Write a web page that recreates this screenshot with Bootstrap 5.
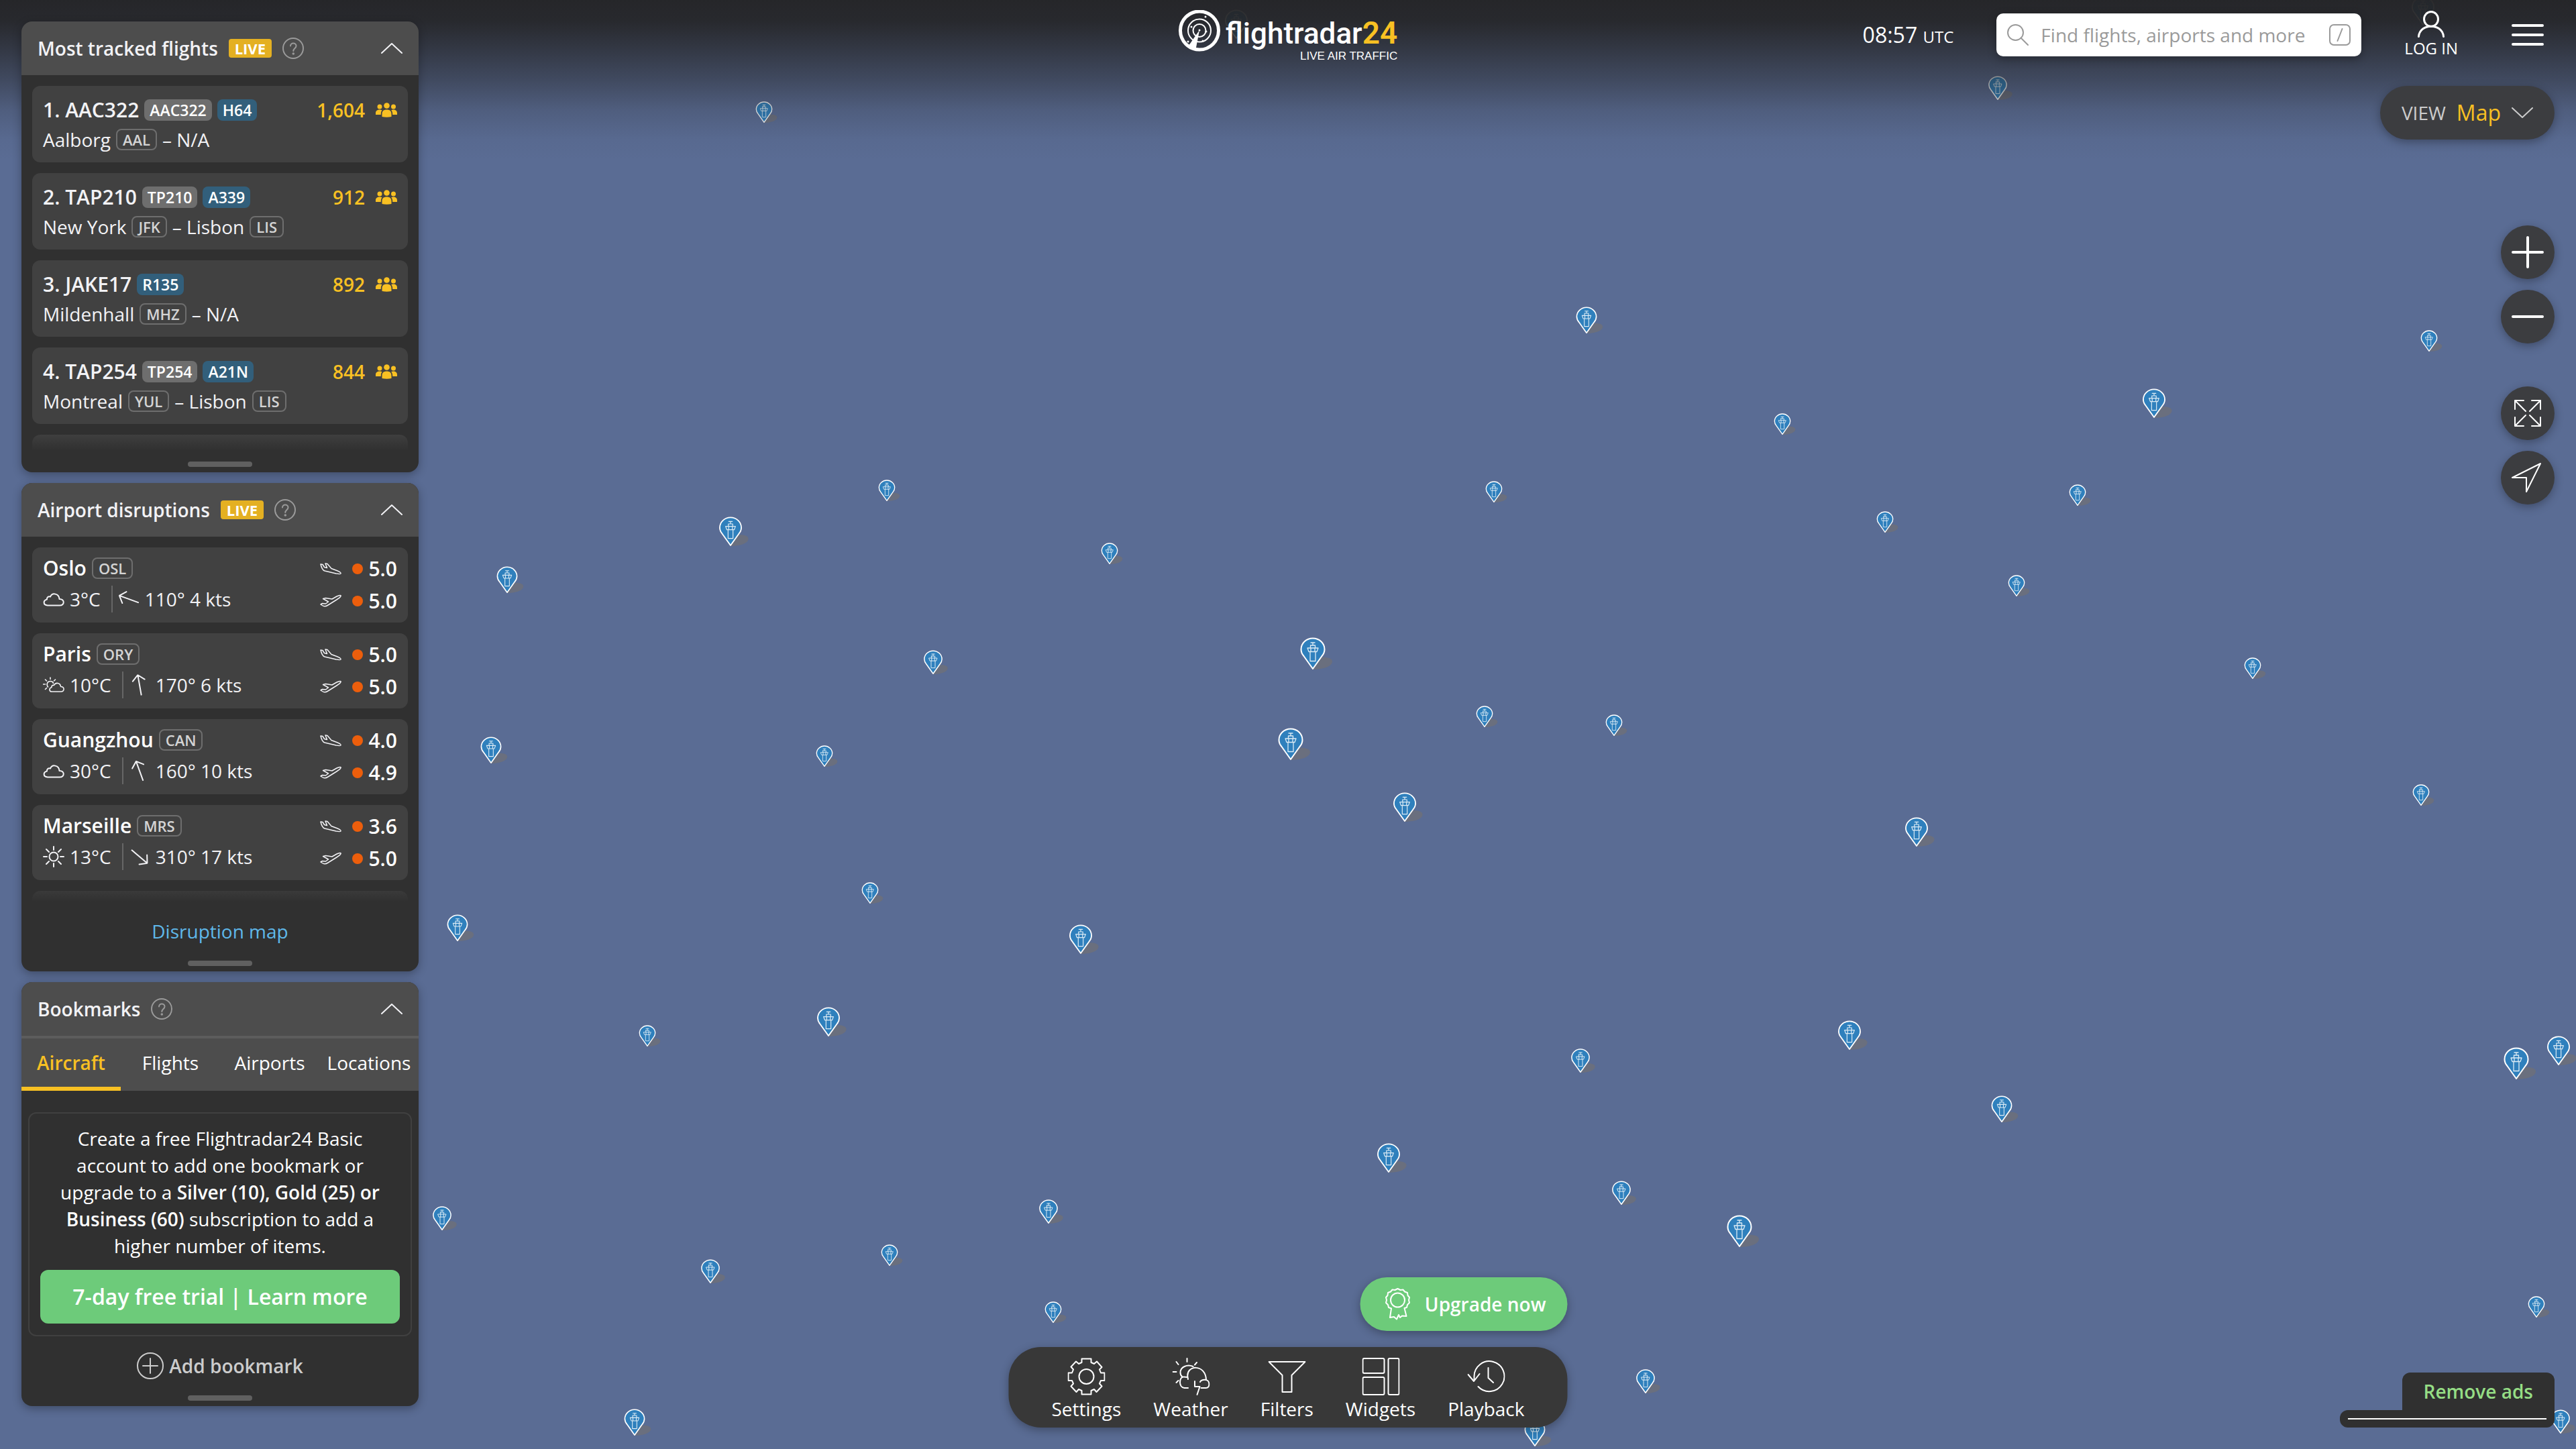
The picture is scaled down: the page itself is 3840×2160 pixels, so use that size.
<!DOCTYPE html>
<html lang="en">
<head>
<meta charset="utf-8">
<meta name="viewport" content="width=device-width, initial-scale=1">
<title>Flightradar24: Live Air Traffic</title>
<link rel="stylesheet" href="https://cdn.jsdelivr.net/npm/bootstrap@5.3.0/dist/css/bootstrap.min.css">
<style>
  :root { --gold: #f8c023; --panel: #303030; --panel-head: #4d4d4d; --tile: #414141; --cta: #6dcb7a; }
  body { font-family: "Open Sans", "Noto Sans", sans-serif; font-size: 28px; line-height: 40px; color: #f2f2f5; background: #5a6c94; }
  svg { display: block; flex: none; fill: none; stroke: currentColor; stroke-width: 2; stroke-linecap: round; stroke-linejoin: round; }
  svg.thick { stroke-width: 3; }
  svg.heavy { stroke-width: 4; }
  button { line-height: inherit; }
  .bare { background: none; border: 0; padding: 0; color: inherit; font: inherit; }

  .map-top { height: 240px; background: linear-gradient(to bottom, rgba(36,36,38,.97) 0, rgba(36,36,38,.93) 32px, rgba(36,36,38,.73) 72px, rgba(36,36,38,.47) 120px, rgba(36,36,38,.2) 164px, rgba(36,36,38,.04) 208px, rgba(36,36,38,0) 240px); }
  .top-bar { height: 104px; padding: 0 48px; }
  .side { flex: 1 1 0; }

  .brand { gap: 8px; padding-top: 15px; color: #fff; }
  .brand-words { line-height: 1; padding-top: 8px; }
  .brand-name { font-family: Roboto, sans-serif; font-size: 44px; line-height: 52px; font-weight: 500; }
  .brand-num { font-size: 46px; font-weight: 600; color: var(--gold); }
  .brand-tag { font-family: "Liberation Sans", Arial, sans-serif; font-size: 17px; line-height: 16px; }

  .clock { font-size: 32px; color: #fff; }
  .clock span { font-size: 24px; }
  .search { width: 544px; height: 64px; margin: 20px 0 0 64px; padding: 0 16px; gap: 18px; border-radius: 10px; background: #fff; color: #9a9a9a; box-shadow: 0 4px 14px rgba(0,0,0,.3); }
  .search input { flex: 1; min-width: 0; border: 0; padding: 0; outline: 0; background: none; color: #555; font-size: 28px; line-height: 40px; }
  .search input::placeholder { color: #9a9a9a; opacity: 1; }
  .login { margin-left: 64px; font-size: 24px; line-height: 32px; color: #fff; }
  .menu-btn { margin-left: 80px; color: #fff; }

  .sidebar { top: 32px; left: 32px; width: 592px; gap: 16px; }
  .panel { background: var(--panel); border-radius: 16px; box-shadow: 0 4px 14px rgba(0,0,0,.3); overflow: hidden; }
  .panel-head { height: 80px; padding: 0 24px; gap: 16px; background: var(--panel-head); }
  .panel-head h2 { font-size: 28px; line-height: 40px; font-weight: 600; margin: 0; }
  .live { min-width: 64px; text-align: center; border-radius: 4px; background: #e4b022; color: #fff; font-size: 22px; line-height: 28px; font-weight: 700; }
  .help { color: #9a9a9a; }
  .tiles { padding: 16px 16px 0; gap: 16px; overflow: hidden; position: relative; }
  .tiles::after { content: ""; position: absolute; left: 0; right: 0; bottom: 0; height: 28px; background: linear-gradient(to bottom, rgba(48,48,48,0), #303030); }
  .flights { height: 560px; }
  .disruptions { height: 544px; }
  .tile { flex: none; background: var(--tile); border-radius: 12px; }
  .flights .tile { height: 114px; padding: 14px 16px 12px; line-height: 44px; }
  .disruptions .tile { height: 112px; padding: 8px 16px; line-height: 48px; }
  .disruptions .tile .left { line-height: 46px; }
  .tag { display: inline-block; height: 32px; line-height: 32px; border-radius: 8px; padding: 0 8px; font-size: 23px; font-weight: 600; color: #fff; }
  .tag-call { background: #6e6e6e; }
  .tag-type { background: #325f7b; }
  .tag-iata { border: 2px solid #6e6e6e; font-size: 22px; line-height: 28px; color: #d4d4d4; }
  .line { display: flex; align-items: center; gap: 8px; }
  .line b { font-size: 30px; font-weight: 600; }
  .watchers { color: var(--gold); font-weight: 600; gap: 16px; }
  .place { font-size: 30px; font-weight: 600; color: #fff; }
  .rule { width: 2px; height: 40px; background: #666; margin-left: 8px; }
  .dot { width: 16px; height: 16px; border-radius: 50%; background: #ec5e0c; margin-left: 8px; }
  .score { font-size: 30px; font-weight: 600; color: #fff; }
  .grip { width: 96px; height: 8px; border-radius: 4px; background: #606060; margin: 16px auto 8px; }
  .map-link { display: block; margin-top: 16px; line-height: 56px; color: #5fb8ea; text-decoration: none; }

  .book-tabs { border-top: 4px solid #5c5c5c; background: var(--panel-head); }
  .book-tabs button { flex: 1 1 0; min-width: 0; line-height: 72px; border-bottom: 6px solid transparent; color: #fff; }
  .book-tabs button.active { color: var(--gold); font-weight: 600; border-color: var(--gold); }
  .promo { margin: 32px 10px 0; padding: 17px 16px; border: 2px solid #404040; border-radius: 12px; color: #fff; }
  .promo p { margin: 0 0 16px; padding: 0 24px; }
  .promo p b { font-weight: 600; }
  .trial { height: 80px; border-radius: 12px; background: var(--cta); color: #fff; font-size: 32px; font-weight: 600; }
  .add-book { padding: 24px 0 8px; gap: 8px; color: #ccc; font-weight: 600; }

  .view-btn { top: 128px; right: 32px; height: 80px; padding: 0 32px; gap: 16px; border-radius: 40px; background: #3c3d40; color: #ccc; font-size: 28px; box-shadow: 0 4px 14px rgba(0,0,0,.3); }
  .view-btn strong { color: var(--gold); font-size: 32px; font-weight: 400; }
  .map-tools { top: 336px; right: 32px; gap: 16px; }
  .round-btn { width: 80px; height: 80px; border-radius: 50%; background: #3c3d40; color: #fff; display: grid; place-items: center; box-shadow: 0 4px 14px rgba(0,0,0,.3); }
  .apart { margin-top: 48px; }

  .dock { bottom: 32px; left: 50%; transform: translateX(-50%); gap: 24px; }
  .upgrade { height: 80px; padding: 0 32px; gap: 16px; border-radius: 40px; background: var(--cta); color: #fff; font-weight: 600; box-shadow: 0 4px 14px rgba(0,0,0,.3); }
  .tool-bar { height: 120px; padding: 16px 64px 8px; gap: 48px; border-radius: 48px; background: #383838; color: #fff; box-shadow: 0 4px 14px rgba(0,0,0,.3); }
  .ads { right: 32px; bottom: 32px; width: 320px; }
  .ads button { background: var(--panel); color: #95dd85; font-weight: 600; padding: 8px 32px; border-radius: 12px 12px 0 0; }
  .ads-slot { background: var(--panel); border-radius: 12px 0 12px 12px; padding: 12px; }
  .ads-slot hr { margin: 0; border: 0; height: 2px; background: #fff; opacity: 1; }
</style>
</head>
<body>
<svg width="0" height="0" class="position-absolute" aria-hidden="true">
  <symbol id="pin" viewBox="-32 -50 64 52" overflow="visible">
    <path d="M0 0C14 0 29-4 29-12C29-17 20-19 12-18Z" fill="#6a6f7e" stroke="none"/>
    <path d="M0-1L-13.500-20C-17-24-17.500-27-17.500-30A17.500 16.500 0 0 1 17.500-30C17.500-27 17-24 13.500-20Z" fill="#2f80bd" stroke="#fff" stroke-width="2"/>
    <path d="M-3-40H3M0-40V-36M-3.500-36H3.500V-32M-3.500-36V-32M-8-32H8L6-26.500H-6ZM-3-32V-26.500M3-32V-26.500M-4-26.500V-12.500H4V-26.500" stroke="#dcebf5" stroke-width="1.300"/>
  </symbol>
  <symbol id="i-help" viewBox="0 0 32 32"><circle cx="16" cy="16" r="15"/><path d="M12 12.500C12 7 20.500 7.500 20.500 12.500C20.500 16 16.300 16 16.300 20"/><circle cx="16.300" cy="24" r=".8" fill="currentColor"/></symbol>
  <symbol id="i-up" viewBox="0 0 32 32"><path d="M1 23L16 9L31 23"/></symbol>
  <symbol id="i-people" viewBox="0 0 32 22"><g fill="currentColor" stroke="none"><circle cx="16.500" cy="4.500" r="4.300"/><circle cx="6" cy="6" r="3.500"/><circle cx="26.500" cy="6" r="3.500"/><path d="M9.500 21V17C9.500 12.500 12 10.500 16.500 10.500S23.500 12.500 23.500 17V21Q16.500 22.500 9.500 21ZM0 18V15.500C0 12 2.500 10.500 6 10.500C7.500 10.500 8.500 10.800 9.500 11.500C8 13 7.800 15 7.800 18ZM32 18V15.500C32 12 29.500 10.500 26.500 10.500C25 10.500 24 10.800 23.300 11.500C24.800 13 25.200 15 25.200 18Z"/></g></symbol>
  <symbol id="i-land" viewBox="0 0 32 20"><path stroke-width="1.500" d="M1 3L4 3.500L6.500 7.500L10.500 8.500L8 2L11 2.500L17 9.500L25 12.500C29 14 31.500 15.500 31 17C30.500 18 27 17.500 24 17L7 13C4 12 2.500 10 1 3Z"/></symbol>
  <symbol id="i-take" viewBox="0 0 32 20"><path stroke-width="1.500" d="M1 15L3.500 13.500L8.500 14L12.500 11L4.500 6.500L8.500 5.500L18 7L25 3C29 1 31.500 1 31 2.500C30.500 4.500 28 6 24 8.500L12 16C8 18.500 6 18.500 1 15Z"/></symbol>
  <symbol id="i-cloud" viewBox="0 0 32 24"><path d="M7 21.500H25C33 21.500 32.500 11.500 24.500 12C24 4 14 1.500 11 8.500C7.500 7.500 5.500 10 6 12.500C0 14 0 21 7 21.500Z"/></symbol>
  <symbol id="i-partly" viewBox="0 0 32 24"><path stroke-width="1.600" d="M13 22H27C32.500 22 32.500 14.500 26.500 14.500C26 9 19 7.500 16.500 12.500C14 12 12.500 13.500 13 15.500C8.500 17 9.500 22 13 22ZM7.500 15C4.500 11 7 6.500 11 6.500C13 6.500 15 7.500 15.500 9.500M11 1V3.500M3.500 4L5.500 6M18.500 4L16.500 6M.5 11H3.500M3.500 18.500L5.500 16.500"/></symbol>
  <symbol id="i-sun" viewBox="0 0 32 32"><circle cx="16" cy="16" r="6.500"/><path d="M16 1V6M16 26V31M1 16H6M26 16H31M5 5L9 9M23 23L27 27M27 5L23 9M9 23L5 27"/></symbol>
  <symbol id="i-arrow" viewBox="0 0 32 32"><path d="M16 31V1M7 9L16 1L25 9"/></symbol>
</svg>

<main class="position-relative vh-100 overflow-hidden">
  <!-- Airport pins: each one is anchored by its tip -->
  <svg class="position-absolute top-0 start-0 w-100 h-100" viewBox="0 0 3840 2160" preserveAspectRatio="xMidYMid slice" role="img" aria-label="Map with airports"><g id="pins"></g></svg>
  <div class="map-top position-absolute top-0 start-0 w-100"></div>

  <header class="top-bar position-absolute top-0 start-0 w-100 d-flex align-items-start">
    <div class="side"></div>
    <a href="#" class="brand d-flex text-decoration-none">
      <svg width="62" height="62" viewBox="0 0 62 62"><circle cx="31" cy="30.500" r="28.500" stroke-width="5"/><circle cx="31" cy="30.500" r="17"/><circle cx="31" cy="30.500" r="9.500"/><path d="M31 30L13.500 55L25.500 58.500Z" fill="#fff" stroke="none"/><g fill="#fff" stroke="none"><circle cx="31" cy="30" r="1.500"/><circle cx="40" cy="10" r="1.500"/><circle cx="19" cy="25" r="1.500"/><circle cx="41" cy="32" r="1.500"/><circle cx="36" cy="46" r="1.500"/><circle cx="14" cy="47" r="1.500"/></g></svg>
      <span class="brand-words d-flex flex-column align-items-end"><span class="brand-name">flightradar<span class="brand-num">24</span></span><span class="brand-tag">LIVE AIR TRAFFIC</span></span>
    </a>
    <div class="side d-flex justify-content-end">
      <div class="clock mt-4 pt-2">08:57 <span>UTC</span></div>
      <form class="search d-flex align-items-center" role="search">
        <svg width="32" height="32" viewBox="0 0 32 32"><circle cx="12.500" cy="12.500" r="11.500"/><path d="M20.500 20.500L31 31"/></svg>
        <input type="text" placeholder="Find flights, airports and more" aria-label="Find flights, airports and more">
        <svg width="32" height="32" viewBox="0 0 32 32"><rect x="1" y="1" width="30" height="30" rx="6"/><path d="M19.500 7L12.500 25"/></svg>
      </form>
      <button type="button" class="bare login d-flex flex-column align-items-center pt-3">
        <svg class="thick" width="40" height="40" viewBox="0 0 40 40"><ellipse cx="20" cy="12.500" rx="10.500" ry="11"/><path d="M1.500 38.500C3 18 37 18 38.500 38.500"/></svg>LOG IN
      </button>
      <button type="button" class="bare menu-btn" aria-label="Menu"><svg class="heavy" width="48" height="104" viewBox="0 0 48 104"><path d="M2 38H46M2 52H46M2 66H46"/></svg></button>
    </div>
  </header>

  <aside class="sidebar position-absolute d-flex flex-column">
    <section class="panel">
      <div class="panel-head d-flex align-items-center"><h2>Most tracked flights</h2><span class="live">LIVE</span><svg class="help" width="32" height="32"><use href="#i-help"/></svg><button class="bare ms-auto" aria-label="Collapse"><svg width="32" height="32"><use href="#i-up"/></svg></button></div>
      <div class="tiles flights d-flex flex-column">
        <article class="tile"><div class="line"><b>1. AAC322</b><span class="tag tag-call">AAC322</span><span class="tag tag-type">H64</span><span class="line watchers ms-auto">1,604<svg width="32" height="22"><use href="#i-people"/></svg></span></div><div class="line">Aalborg<span class="tag tag-iata">AAL</span>– N/A</div></article>
        <article class="tile"><div class="line"><b>2. TAP210</b><span class="tag tag-call">TP210</span><span class="tag tag-type">A339</span><span class="line watchers ms-auto">912<svg width="32" height="22"><use href="#i-people"/></svg></span></div><div class="line">New York<span class="tag tag-iata">JFK</span>– Lisbon<span class="tag tag-iata">LIS</span></div></article>
        <article class="tile"><div class="line"><b>3. JAKE17</b><span class="tag tag-type">R135</span><span class="line watchers ms-auto">892<svg width="32" height="22"><use href="#i-people"/></svg></span></div><div class="line">Mildenhall<span class="tag tag-iata">MHZ</span>– N/A</div></article>
        <article class="tile"><div class="line"><b>4. TAP254</b><span class="tag tag-call">TP254</span><span class="tag tag-type">A21N</span><span class="line watchers ms-auto">844<svg width="32" height="22"><use href="#i-people"/></svg></span></div><div class="line">Montreal<span class="tag tag-iata">YUL</span>– Lisbon<span class="tag tag-iata">LIS</span></div></article>
        <article class="tile"></article>
      </div>
      <div class="grip"></div>
    </section>

    <section class="panel">
      <div class="panel-head d-flex align-items-center"><h2>Airport disruptions</h2><span class="live">LIVE</span><svg class="help" width="32" height="32"><use href="#i-help"/></svg><button class="bare ms-auto" aria-label="Collapse"><svg width="32" height="32"><use href="#i-up"/></svg></button></div>
      <div class="tiles disruptions d-flex flex-column">
        <article class="tile d-flex justify-content-between"><div class="left"><div class="line"><span class="place">Oslo</span><span class="tag tag-iata">OSL</span></div><div class="line"><svg width="32" height="24"><use href="#i-cloud"/></svg>3°C<span class="rule"></span><svg width="32" height="32" viewBox="0 0 32 32"><use href="#i-arrow" width="32" height="32" transform="rotate(-70 16 16)"/></svg>110° 4 kts</div></div><div><div class="line"><svg width="32" height="20"><use href="#i-land"/></svg><span class="dot"></span><span class="score">5.0</span></div><div class="line"><svg width="32" height="20"><use href="#i-take"/></svg><span class="dot"></span><span class="score">5.0</span></div></div></article>
        <article class="tile d-flex justify-content-between"><div class="left"><div class="line"><span class="place">Paris</span><span class="tag tag-iata">ORY</span></div><div class="line"><svg width="32" height="24"><use href="#i-partly"/></svg>10°C<span class="rule"></span><svg width="32" height="32" viewBox="0 0 32 32"><use href="#i-arrow" width="32" height="32" transform="rotate(-10 16 16)"/></svg>170° 6 kts</div></div><div><div class="line"><svg width="32" height="20"><use href="#i-land"/></svg><span class="dot"></span><span class="score">5.0</span></div><div class="line"><svg width="32" height="20"><use href="#i-take"/></svg><span class="dot"></span><span class="score">5.0</span></div></div></article>
        <article class="tile d-flex justify-content-between"><div class="left"><div class="line"><span class="place">Guangzhou</span><span class="tag tag-iata">CAN</span></div><div class="line"><svg width="32" height="24"><use href="#i-cloud"/></svg>30°C<span class="rule"></span><svg width="32" height="32" viewBox="0 0 32 32"><use href="#i-arrow" width="32" height="32" transform="rotate(-20 16 16)"/></svg>160° 10 kts</div></div><div><div class="line"><svg width="32" height="20"><use href="#i-land"/></svg><span class="dot"></span><span class="score">4.0</span></div><div class="line"><svg width="32" height="20"><use href="#i-take"/></svg><span class="dot"></span><span class="score">4.9</span></div></div></article>
        <article class="tile d-flex justify-content-between"><div class="left"><div class="line"><span class="place">Marseille</span><span class="tag tag-iata">MRS</span></div><div class="line"><svg width="32" height="32"><use href="#i-sun"/></svg>13°C<span class="rule"></span><svg width="32" height="32" viewBox="0 0 32 32"><use href="#i-arrow" width="32" height="32" transform="rotate(130 16 16)"/></svg>310° 17 kts</div></div><div><div class="line"><svg width="32" height="20"><use href="#i-land"/></svg><span class="dot"></span><span class="score">3.6</span></div><div class="line"><svg width="32" height="20"><use href="#i-take"/></svg><span class="dot"></span><span class="score">5.0</span></div></div></article>
        <article class="tile"></article>
      </div>
      <a href="#" class="map-link text-center">Disruption map</a>
      <div class="grip"></div>
    </section>

    <section class="panel">
      <div class="panel-head d-flex align-items-center"><h2>Bookmarks</h2><svg class="help" width="32" height="32"><use href="#i-help"/></svg><button class="bare ms-auto" aria-label="Collapse"><svg width="32" height="32"><use href="#i-up"/></svg></button></div>
      <div class="book-tabs d-flex" role="tablist"><button class="bare active" role="tab">Aircraft</button><button class="bare" role="tab">Flights</button><button class="bare" role="tab">Airports</button><button class="bare" role="tab">Locations</button></div>
      <div class="promo text-center">
        <p>Create a free Flightradar24 Basic account to add one bookmark or upgrade to a <b>Silver (10), Gold (25) or</b> <b>Business (60)</b> subscription to add a higher number of items.</p>
        <button type="button" class="trial btn w-100 p-0">7-day free trial | Learn more</button>
      </div>
      <button type="button" class="bare add-book w-100 d-flex align-items-center justify-content-center"><svg width="40" height="40" viewBox="0 0 40 40"><circle cx="20" cy="20" r="19"/><path d="M20 9V31M9 20H31"/></svg>Add bookmark</button>
      <div class="grip"></div>
    </section>
  </aside>

  <button type="button" class="bare view-btn position-absolute d-flex align-items-center">VIEW <strong>Map</strong><svg width="32" height="32" viewBox="0 0 32 32"><path d="M1 9L16 23L31 9"/></svg></button>

  <div class="map-tools position-absolute d-flex flex-column">
    <button type="button" class="bare round-btn" aria-label="Zoom in"><svg class="heavy" width="48" height="48" viewBox="0 0 48 48"><path d="M24 2V46M2 24H46"/></svg></button>
    <button type="button" class="bare round-btn" aria-label="Zoom out"><svg class="heavy" width="48" height="48" viewBox="0 0 48 48"><path d="M2 24H46"/></svg></button>
    <button type="button" class="bare round-btn apart" aria-label="Full screen"><svg width="40" height="40" viewBox="0 0 40 40"><path d="M1 14V1H14M1 1L17 17M26 1H39V14M39 1L23 17M1 26V39H14M1 39L17 23M26 39H39V26M39 39L23 23"/></svg></button>
    <button type="button" class="bare round-btn" aria-label="My location"><svg width="48" height="48" viewBox="0 0 48 48"><path d="M1 24L43 3L22 45V24Z"/></svg></button>
  </div>

  <div class="dock position-absolute d-flex flex-column align-items-end">
    <button type="button" class="bare upgrade d-flex align-items-center"><svg width="48" height="48" viewBox="0 0 48 48"><circle cx="24" cy="18" r="10.500"/><path d="M24 1L28 3L32 2.500L34.500 5.500L38.500 7L39 11L41.500 14L40.500 18L41.500 22L38.500 25L37.500 29L34 30L37 42L30.500 41.500L27.500 44L25.500 40L22.500 46.500L18.500 43L12.500 44L14.500 30.500L10.500 29L9.500 25L6.500 22L7.500 18L6.500 14L9 11L9.500 7L13.500 5.500L16 2.500L20 3Z"/></svg>Upgrade now</button>
    <nav class="tool-bar d-flex">
      <button type="button" class="bare d-flex flex-column align-items-center"><svg width="56" height="56" viewBox="0 0 56 56"><circle cx="28" cy="28" r="11"/><path d="M21 1.500H35V7L39.500 9L43.500 5.500L51 14L47.500 17.500L49.500 22.500H55V34H49.500L47.500 38.500L51 42.500L43 51L39.500 47L35 49V54.500H21V49L16.500 47L13 51L5 42.500L8.500 38.500L6.500 34H1V22.500H6.500L8.500 17.500L5 13.500L12.500 5.500L16.500 9L21 7Z"/></svg>Settings</button>
      <button type="button" class="bare d-flex flex-column align-items-center"><svg width="56" height="56" viewBox="0 0 56 56"><path d="M22 1V6M6 6L9 10M36.500 7L33.500 10.500M1 21H6M6 37L9 34M31 13C22 9 12 14 12 22C12 25 13 27 15 28.500M23.500 45H18C9 44 10 28 17 28.500L23 29C20 10 50 9 50.500 33C56 34 57 45 50 45H43M41.500 36C43 33 46 32.500 50.500 33M33.500 35V43H41L37 55M23 29L23.500 32"/></svg>Weather</button>
      <button type="button" class="bare d-flex flex-column align-items-center"><svg width="56" height="56" viewBox="0 0 56 56"><path d="M1 6H55L35 26V51H21V26Z"/></svg>Filters</button>
      <button type="button" class="bare d-flex flex-column align-items-center"><svg width="56" height="56" viewBox="0 0 56 56"><rect x="1" y="1" width="32" height="22" rx="2"/><rect x="1" y="29" width="32" height="26" rx="2"/><rect x="39" y="1" width="16" height="54" rx="2"/></svg>Widgets</button>
      <button type="button" class="bare d-flex flex-column align-items-center"><svg width="56" height="56" viewBox="0 0 56 56"><path d="M10 34V28A22.500 22.500 0 1 1 16 43M1 25L9.500 35L18 24M31 15V30L38.500 37"/></svg>Playback</button>
    </nav>
  </div>

  <div class="ads position-absolute d-flex flex-column">
    <button type="button" class="bare align-self-end">Remove ads</button>
    <div class="ads-slot"><hr></div>
  </div>
</main>
<script>
  // [x, y of the tip, pin height]
  const airports = [
    [1843,58,44],[3612,38,44],[1139,183,32],[1322,747,32],[1089,814,44],[1654,841,32],[756,884,40],[1391,1005,36],
    [732,1138,40],[1229,1143,32],[1297,1347,32],[682,1403,40],[1611,1422,44],[1235,1545,44],[965,1560,32],[659,1834,36],
    [1563,1824,36],[1326,1887,32],[1059,1913,36],[1570,1972,32],[946,2140,40],[2365,497,40],[2657,648,32],[2227,749,32],
    [1957,998,48],[2213,1084,32],[2406,1097,32],[1924,1133,48],[2094,1225,44],[2757,1565,44],[2356,1599,36],[2070,1748,44],
    [2417,1796,36],[2593,1859,48],[2453,2077,36],[2288,2156,40],[2978,149,36],[3621,524,32],[3211,623,44],[3097,754,32],
    [2810,794,32],[3006,889,32],[3358,1012,32],[3609,1201,32],[2857,1262,44],[3751,1609,48],[3814,1588,44],[2984,1673,40],
    [3781,1964,32],[3817,2137,36]
  ];
  document.getElementById('pins').innerHTML = airports.map(([x, y, h]) =>
    `<use href="#pin" x="-32" y="-50" width="64" height="52" transform="translate(${x} ${y}) scale(${h / 48})"/>`).join('');
</script>
<script src="https://cdn.jsdelivr.net/npm/bootstrap@5.3.0/dist/js/bootstrap.bundle.min.js"></script>
</body>
</html>
